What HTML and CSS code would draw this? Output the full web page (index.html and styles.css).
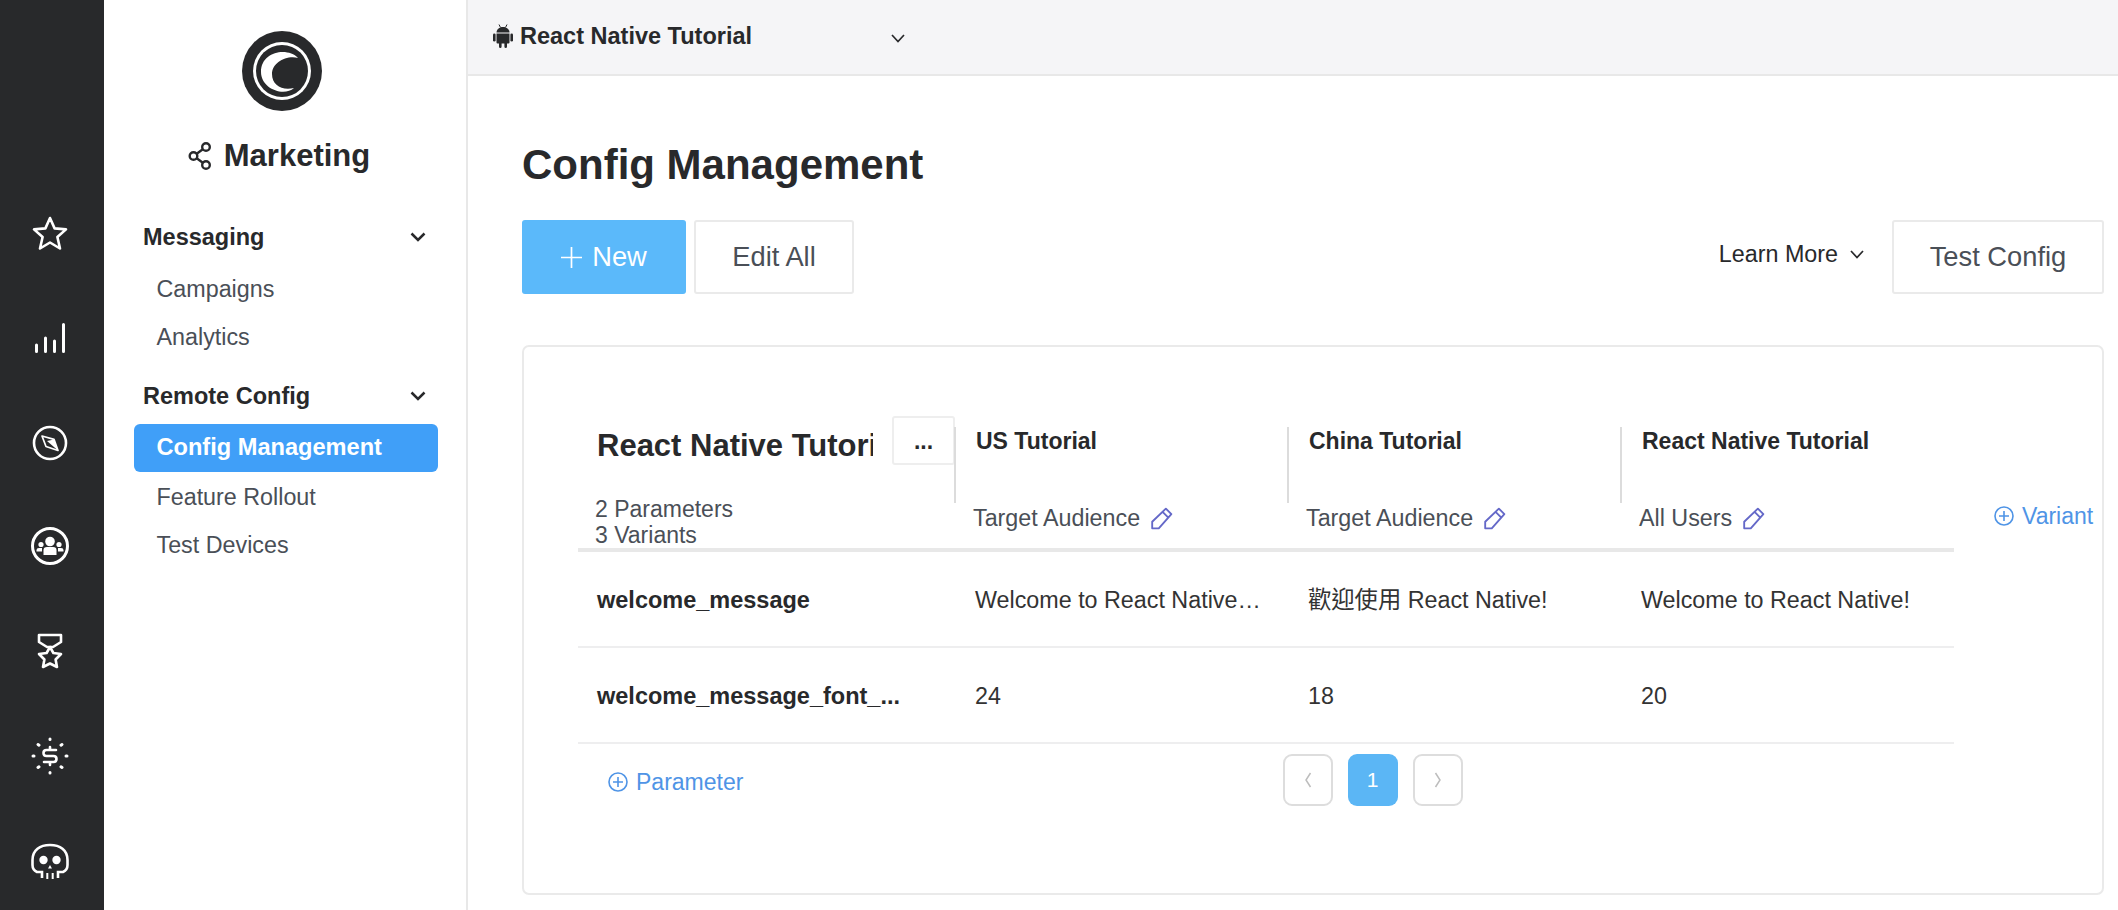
FILE: index.html
```html
<!DOCTYPE html>
<html lang="en">
<head>
	<meta charset="UTF-8">
	<title>Config Management</title>
	<link rel="stylesheet" href="styles.css">
</head>
<body>
<div class="app">
  <!-- icon rail -->
  <nav class="rail">
    <div class="rail-item">
      <svg width="40" height="40" viewBox="-20 -20 40 40" fill="none" stroke="#fff" stroke-width="2.6" stroke-linejoin="round"><path d="M0 -16 L4.6 -5.6 L16 -4.6 L7.4 3 L10 14.5 L0 8.5 L-10 14.5 L-7.4 3 L-16 -4.6 L-4.6 -5.6 Z"/></svg>
    </div>
    <div class="rail-item">
      <svg width="40" height="40" viewBox="-20 -20 40 40" fill="none" stroke="#fff" stroke-width="3" stroke-linecap="round"><path d="M-13.5 12.5 V6 M-4.5 12.5 V-1 M4.5 12.5 V2 M13.5 12.5 V-14.5"/></svg>
    </div>
    <div class="rail-item">
      <svg width="40" height="40" viewBox="-20 -20 40 40" fill="none" stroke="#fff"><circle r="16" stroke-width="2.6"/><path d="M-8 -7 L4 -3.6 L8 7.5 L-4 3.5 Z" stroke-width="1.7" stroke-linejoin="round"/><path d="M-3 -2 L4 -3.6 L8 7.5 Z" fill="#fff" stroke="none"/></svg>
    </div>
    <div class="rail-item">
      <svg width="40" height="40" viewBox="-20 -19 40 40" fill="none" stroke="#fff"><circle r="17.5" stroke-width="3"/><g fill="#fff" stroke="none"><circle cy="-4.5" r="4.8"/><path d="M-6.5 9 V4 Q-6.5 1 -3 1 H3 Q6.5 1 6.5 4 V9 Z"/><circle cx="-9" cy="-1.5" r="2.6"/><circle cx="9" cy="-1.5" r="2.6"/><path d="M-13.5 5.5 V4 Q-13.5 2 -11 2 H-8 V5.5 Z M13.5 5.5 V4 Q13.5 2 11 2 H8 V5.5 Z"/></g></svg>
    </div>
    <div class="rail-item">
      <svg width="40" height="40" viewBox="-20 -20 40 40" fill="none" stroke="#fff" stroke-width="2.6" stroke-linejoin="round"><path d="M-11 -17 H11 V-10 L3 -5 H-3 L-11 -10 Z"/><path d="M0 -5 L3.4 1 L11 2 L5.6 7.5 L7 15 L0 11.5 L-7 15 L-5.6 7.5 L-11 2 L-3.4 1 Z"/></svg>
    </div>
    <div class="rail-item">
      <svg width="40" height="40" viewBox="-20 -20 40 40" fill="none" stroke="#fff" stroke-width="3" stroke-linecap="round"><path d="M6 -6 H-3.5 Q-6.5 -6 -6.5 -3 Q-6.5 0 -3.5 0 H3.5 Q6.5 0 6.5 3 Q6.5 6 3.5 6 H-6 M0 -9 V-7 M0 7 V9" stroke-width="2.6"/><path d="M0 -17 V-16.4 M0 16.4 V17 M-17 0 H-16 M16 0 H17 M-12 -11.5 L-11 -10.8 M12 -11.5 L11 -10.8 M-12 11.5 L-11 10.8 M12 11.5 L11 10.8"/></svg>
    </div>
    <div class="rail-item">
      <svg width="40" height="40" viewBox="-20 -20 40 40" fill="none" stroke="#fff" stroke-width="2.6"><path d="M-8 17 V11 H-13 Q-17.5 9 -17.5 4 V-1 C-17.5 -11 -10 -16 0 -16 C10 -16 17.5 -11 17.5 -1 V4 Q17.5 9 13 11 H8 V17"/><path d="M-2.7 12 V18 M2.7 12 V18" stroke-width="2"/><g fill="#fff" stroke="none"><circle cx="-6.5" cy="-1" r="4.2"/><circle cx="6.5" cy="-1" r="4.2"/><path d="M0 4 L2 7.5 H-2 Z"/></g></svg>
    </div>
  </nav>

  <!-- section sidebar -->
  <aside class="sidebar">
    <svg class="logo" width="80" height="80" viewBox="0 0 80 80">
      <circle cx="40" cy="40" r="40" fill="#28292b"/>
      <circle cx="40" cy="40" r="29" fill="#fff"/>
      <circle cx="40" cy="40" r="26" fill="#28292b"/>
      <path d="M56 27 C46 16 19 20 19 41 C19 58 42 66 52 57 C40 60 30 54 30 43 C30 32 44 24 56 27 Z" fill="#fff"/>
    </svg>
    <div class="section-name">
      <svg width="24" height="30" viewBox="0 0 24 30" fill="none" stroke="#28292b" stroke-width="2.4"><circle cx="18" cy="6" r="3.8"/><circle cx="5.5" cy="15" r="3.8"/><circle cx="18" cy="24" r="3.8"/><path d="M14.8 8.3 L8.7 12.7 M8.7 17.3 L14.8 21.7"/></svg>
      <span>Marketing</span>
    </div>
    <div class="nav">
      <div class="nav-head">
        <span>Messaging</span>
        <svg width="16" height="10" viewBox="0 0 16 10" fill="none" stroke="#28292b" stroke-width="2.5"><path d="M1.5 1.5 L8 8 L14.5 1.5"/></svg>
      </div>
      <a class="nav-item">Campaigns</a>
      <a class="nav-item">Analytics</a>
      <div class="nav-head nav-head-second">
        <span>Remote Config</span>
        <svg width="16" height="10" viewBox="0 0 16 10" fill="none" stroke="#28292b" stroke-width="2.5"><path d="M1.5 1.5 L8 8 L14.5 1.5"/></svg>
      </div>
      <a class="nav-item active">Config Management</a>
      <a class="nav-item">Feature Rollout</a>
      <a class="nav-item">Test Devices</a>
    </div>
  </aside>

  <div class="main">
    <header class="topbar">
      <svg width="20" height="24" viewBox="0 0 20 24" fill="#28292b"><path d="M3.5 8.5 C3.5 5.5 6 3 10 3 C14 3 16.5 5.5 16.5 8.5 Z"/><path d="M6 0.5 L7.5 3.5 M14 0.5 L12.5 3.5" stroke="#28292b" stroke-width="1"/><path d="M3.5 9.5 H16.5 V18.5 Q16.5 19.5 15.5 19.5 H14 V22.5 Q14 24 12.7 24 Q11.4 24 11.4 22.5 V19.5 H8.6 V22.5 Q8.6 24 7.3 24 Q6 24 6 22.5 V19.5 H4.5 Q3.5 19.5 3.5 18.5 Z"/><rect x="0" y="9.5" width="2.6" height="8" rx="1.3"/><rect x="17.4" y="9.5" width="2.6" height="8" rx="1.3"/></svg>
      <span class="app-name">React Native Tutorial</span>
      <svg class="app-caret" width="14" height="9" viewBox="0 0 14 9" fill="none" stroke="#28292b" stroke-width="1.7"><path d="M1 1 L7 7.5 L13 1"/></svg>
    </header>

    <div class="content">
      <h1>Config Management</h1>
      <div class="actions">
        <button class="btn btn-primary">
          <svg width="21" height="21" viewBox="0 0 21 21" stroke="#fff" stroke-width="1.7"><path d="M0 10.5 H21 M10.5 0 V21"/></svg>
          New
        </button>
        <button class="btn">Edit All</button>
        <a class="learn-more">
          Learn More
          <svg width="14" height="9" viewBox="0 0 14 9" fill="none" stroke="#28292b" stroke-width="1.7"><path d="M1 1 L7 7.5 L13 1"/></svg>
        </a>
        <button class="btn btn-test">Test Config</button>
      </div>

      <section class="card">
        <div class="head">
          <div class="head-first">
            <div class="head-title">
              <div class="config-name">React Native Tutorial</div>
              <button class="more">...</button>
            </div>
            <div class="counts">2 Parameters<br>3 Variants</div>
          </div>
          <div>
            <div class="variant-top"><div class="variant-name">US Tutorial</div></div>
            <div class="audience">
              Target Audience
              <svg width="23" height="23" viewBox="0 0 21 21" fill="none" stroke="#6468c8" stroke-width="1.7" stroke-linejoin="round"><path d="M14.5 1.5 L19.5 6.5 L8 19.5 H2 V13.5 Z M11.5 4.5 L16.5 9.5"/></svg>
            </div>
          </div>
          <div>
            <div class="variant-top"><div class="variant-name">China Tutorial</div></div>
            <div class="audience">
              Target Audience
              <svg width="23" height="23" viewBox="0 0 21 21" fill="none" stroke="#6468c8" stroke-width="1.7" stroke-linejoin="round"><path d="M14.5 1.5 L19.5 6.5 L8 19.5 H2 V13.5 Z M11.5 4.5 L16.5 9.5"/></svg>
            </div>
          </div>
          <div>
            <div class="variant-top"><div class="variant-name">React Native Tutorial</div></div>
            <div class="audience">
              All Users
              <svg width="23" height="23" viewBox="0 0 21 21" fill="none" stroke="#6468c8" stroke-width="1.7" stroke-linejoin="round"><path d="M14.5 1.5 L19.5 6.5 L8 19.5 H2 V13.5 Z M11.5 4.5 L16.5 9.5"/></svg>
            </div>
          </div>
          <a class="add add-variant">
            <svg width="20" height="20" viewBox="0 0 20 20" fill="none" stroke="#4f94e6" stroke-width="1.6"><circle cx="10" cy="10" r="9"/><path d="M5 10 H15 M10 5 V15"/></svg>
            Variant
          </a>
        </div>
        <div class="head-line"></div>

        <div class="row">
          <div class="cell param">welcome_message</div>
          <div class="cell">Welcome to React Native…</div>
          <div class="cell">歡迎使用 React Native!</div>
          <div class="cell">Welcome to React Native!</div>
        </div>
        <div class="row">
          <div class="cell param">welcome_message_font_...</div>
          <div class="cell">24</div>
          <div class="cell">18</div>
          <div class="cell">20</div>
        </div>

        <div class="foot">
          <a class="add add-param">
            <svg width="20" height="20" viewBox="0 0 20 20" fill="none" stroke="#4f94e6" stroke-width="1.6"><circle cx="10" cy="10" r="9"/><path d="M5 10 H15 M10 5 V15"/></svg>
            Parameter
          </a>
          <div class="pager">
            <span class="page">
              <svg width="8" height="16" viewBox="0 0 8 16" fill="none" stroke="#bdbdbd" stroke-width="1.5"><path d="M6.5 1 L2 8 L6.5 15"/></svg>
            </span>
            <span class="page current">1</span>
            <span class="page">
              <svg width="8" height="16" viewBox="0 0 8 16" fill="none" stroke="#bdbdbd" stroke-width="1.5"><path d="M1.5 1 L6 8 L1.5 15"/></svg>
            </span>
          </div>
        </div>
      </section>
    </div>
  </div>
</div>
</body>
</html>
```

FILE: styles.css
```css
html, body {
  margin: 0;
  height: 100%;
  overflow: hidden;
  background: #fff;
  color: #28292b;
  font-family: "Liberation Sans", "Noto Sans CJK TC", sans-serif;
  font-size: 23px;
}

.app {
  display: flex;
  height: 910px;
}

/* icon rail */
.rail {
  flex: none;
  box-sizing: border-box;
  width: 104px;
  padding: 182px 5px 0 0;
  background: #28292b;
}

.rail-item {
  display: flex;
  align-items: center;
  justify-content: center;
  height: 104.4px;
}

/* section sidebar */
.sidebar {
  flex: none;
  display: flex;
  flex-direction: column;
  align-items: center;
  box-sizing: border-box;
  width: 364px;
  padding: 31px 0 0;
  border-right: 2px solid #e8e8e8;
}

.logo {
  margin-right: 6px;
}

.section-name {
  display: flex;
  align-items: center;
  gap: 12px;
  margin: 25px 12px 0 0;
  font-size: 31px;
  font-weight: bold;
  line-height: 40px;
}

.nav {
  align-self: stretch;
  margin-top: 37px;
  padding: 0 28px 0 30px;
}

.nav-head {
  display: flex;
  align-items: center;
  justify-content: space-between;
  height: 48px;
  margin-bottom: 3px;
  padding: 0 12px 0 9px;
  font-size: 23.5px;
  font-weight: bold;
}

.nav-head-second {
  margin: 12px 0 4px;
}

.nav-item {
  display: block;
  height: 48px;
  padding-left: 22.5px;
  border-radius: 6px;
  color: #4a4f57;
  font-size: 23.3px;
  line-height: 50px;
}

.nav-item.active {
  background: #409ff8;
  color: #fff;
  font-size: 23.6px;
  font-weight: bold;
  line-height: 47px;
}

/* main area */
.main {
  flex: 1;
  min-width: 0;
}

.topbar {
  display: flex;
  align-items: center;
  box-sizing: border-box;
  height: 76px;
  padding: 0 0 2px 25px;
  border-bottom: 2px solid #e8e8e8;
  background: #f5f5f7;
}

.app-name {
  margin-left: 7px;
  font-size: 23.5px;
  font-weight: bold;
}

.app-caret {
  margin: 4px 0 0 139px;
}

.content {
  padding: 64px 14px 0 54px;
}

h1 {
  margin: 0;
  font-size: 42px;
  line-height: 50px;
}

.actions {
  display: flex;
  align-items: center;
  margin-top: 30px;
}

.btn {
  display: flex;
  align-items: center;
  justify-content: center;
  box-sizing: border-box;
  width: 160px;
  height: 74px;
  padding: 0;
  border: 2px solid #eaeaea;
  border-radius: 3px;
  background: #fff;
  color: #4a4f57;
  font-family: inherit;
  font-size: 27.3px;
}

.btn-primary {
  gap: 10px;
  width: 164px;
  margin-right: 8px;
  border: 0;
  background: #5bb9fa;
  color: #fff;
}

.learn-more {
  display: flex;
  align-items: center;
  gap: 12px;
  margin: 0 28px 6px auto;
  font-size: 23.3px;
}

.btn-test {
  width: 212px;
}

/* config table */
.card {
  box-sizing: border-box;
  height: 550px;
  margin-top: 51px;
  padding: 69px 0 0 54px;
  border: 2px solid #eaeaea;
  border-radius: 7px;
}

.head, .row {
  display: grid;
  grid-template-columns: 377px 333px 333px 333px;
}

.head {
  grid-template-columns: 376px 333px 333px 334px 148px;
  height: 132px;
}

.head-first {
  padding-left: 19px;
}

.head-title {
  display: flex;
  align-items: flex-start;
}

.config-name {
  flex: none;
  width: 276px;
  height: 49px;
  overflow: hidden;
  font-size: 31px;
  font-weight: bold;
  line-height: 59px;
  white-space: nowrap;
}

.more {
  flex: none;
  box-sizing: border-box;
  width: 63px;
  height: 49px;
  margin-left: 19px;
  padding: 2px 0 0;
  border: 2px solid #eee;
  border-radius: 3px;
  background: #fff;
  color: #28292b;
  font-family: inherit;
  font-size: 23px;
  font-weight: bold;
}

.counts {
  margin: 31px 0 0 -2px;
  color: #4a4f57;
  line-height: 26px;
}

.variant-top {
  box-sizing: border-box;
  height: 76px;
  margin-top: 16px;
  padding-left: 20px;
  border-left: 2px solid #dcdcdc;
}

.variant-name {
  margin-top: -5px;
  font-weight: bold;
  line-height: 28px;
}

.audience {
  display: flex;
  align-items: center;
  gap: 10px;
  margin-top: 1px;
  padding-left: 19px;
  color: #4a4f57;
  font-size: 23.3px;
  line-height: 28px;
}

.add {
  display: flex;
  align-items: center;
  gap: 8px;
  color: #4f94e6;
  line-height: 26px;
}

.add-variant {
  align-self: start;
  padding: 87px 0 0 40px;
}

.head-line {
  width: 1376px;
  height: 4px;
  background: #e8e8e8;
}

.row {
  box-sizing: border-box;
  width: 1376px;
  height: 96px;
  border-bottom: 2px solid #eeeeef;
}

.row:first-of-type {
  height: 97px;
}

.cell {
  align-self: center;
  padding: 2px 0 0 20px;
  color: #333;
  font-size: 23.3px;
  line-height: 28px;
  white-space: nowrap;
}

.cell.param {
  padding-left: 19px;
  color: #28292b;
  font-size: 23.5px;
  font-weight: bold;
}

.foot {
  display: grid;
  grid-template-columns: 704.5px auto;
  padding-top: 10px;
}

.add-param {
  align-self: start;
  padding: 15px 0 0 30px;
}

.pager {
  display: flex;
  gap: 15px;
}

.page {
  display: flex;
  align-items: center;
  justify-content: center;
  box-sizing: border-box;
  width: 50px;
  height: 52px;
  border: 2px solid #ddd;
  border-radius: 9px;
}

.page.current {
  border: 0;
  background: #5bb6f5;
  color: #fff;
  font-size: 21px;
}
```
